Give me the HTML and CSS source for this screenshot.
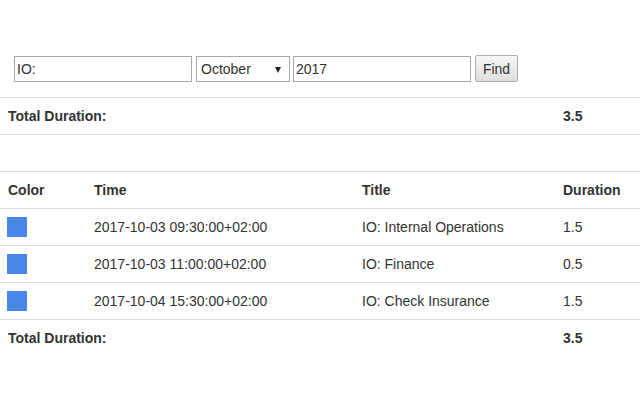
FILE: index.html
```html
<!DOCTYPE html>
<html lang="en">
<head>
    <meta charset="UTF-8">
    <title>Duration</title>
    <link rel="stylesheet" href="styles.css">
</head>
<body>
<form class="search">
    <input class="field" type="text" value="IO:">
    <span class="pick">
        <select class="month">
            <option>October</option>
        </select>
        <span class="arrow"></span>
    </span>
    <input class="field year" type="text" value="2017">
    <button class="find" type="button">Find</button>
</form>
<table class="table total">
    <colgroup>
        <col class="c1"><col class="c2"><col class="c3"><col class="c4">
    </colgroup>
    <tr>
        <th colspan="3">Total Duration:</th>
        <th>3.5</th>
    </tr>
</table>
<table class="table events">
    <colgroup>
        <col class="c1"><col class="c2"><col class="c3"><col class="c4">
    </colgroup>
    <thead>
    <tr>
        <th>Color</th>
        <th>Time</th>
        <th>Title</th>
        <th>Duration</th>
    </tr>
    </thead>
    <tbody>
    <tr>
        <td class="color"><span class="swatch"></span></td>
        <td>2017-10-03 09:30:00+02:00</td>
        <td>IO: Internal Operations</td>
        <td>1.5</td>
    </tr>
    <tr>
        <td class="color"><span class="swatch"></span></td>
        <td>2017-10-03 11:00:00+02:00</td>
        <td>IO: Finance</td>
        <td>0.5</td>
    </tr>
    <tr>
        <td class="color"><span class="swatch"></span></td>
        <td>2017-10-04 15:30:00+02:00</td>
        <td>IO: Check Insurance</td>
        <td>1.5</td>
    </tr>
    </tbody>
    <tfoot>
    <tr>
        <th colspan="3">Total Duration:</th>
        <th>3.5</th>
    </tr>
    </tfoot>
</table>
</body>
</html>
```
FILE: styles.css
```css
*{
    margin: 0;
    padding: 0;
    box-sizing: border-box;
}
body{
    font-family: "Liberation Sans", Arial, sans-serif;
    font-size: 14px;
    line-height: 20px;
    color: #333;
    background: #fff;
}
.search{
    display: flex;
    align-items: flex-start;
    padding: 56px 0 0 14px;
    height: 82px;
}
.field,.month,.find{
    font-family: "Liberation Sans", Arial, sans-serif;
    font-size: 14px;
    color: #333;
    height: 26px;
    border: 1px solid #a9a9a9;
    background: #fff;
    outline: none;
}
.field{
    width: 178px;
    padding: 1px 2px;
}
.pick{
    position: relative;
    display: block;
    margin-left: 4px;
}
.month{
    display: block;
    width: 94px;
    padding: 0 4px;
    appearance: none;
    -webkit-appearance: none;
    border-radius: 0;
}
.arrow{
    position: absolute;
    right: 9px;
    top: 11px;
    border-left: 3.5px solid transparent;
    border-right: 3.5px solid transparent;
    border-top: 6px solid #222;
}
.year{
    margin-left: 3px;
}
.find{
    width: 43px;
    height: 27px;
    margin-left: 4px;
    margin-top: -1px;
    border: 1px solid #adadad;
    border-radius: 2px;
    background: linear-gradient(#f6f6f6, #dedede);
    color: #333;
}
.table{
    width: 100%;
    border-collapse: collapse;
    table-layout: fixed;
}
.c1{ width: 86px; }
.c2{ width: 268px; }
.c3{ width: 201px; }
.c4{ width: 85px; }
.table th,.table td{
    padding: 8px;
    text-align: left;
    vertical-align: top;
    border-top: 1px solid #ddd;
    height: 37px;
}
.table th{
    font-weight: bold;
}
.total{
    margin-top: 15px;
    margin-bottom: 36px;
    border-bottom: 1px solid #ddd;
}
.color{
    padding-left: 7px !important;
}
.swatch{
    display: block;
    width: 20px;
    height: 20px;
    background: #4a86e8;
}
```
